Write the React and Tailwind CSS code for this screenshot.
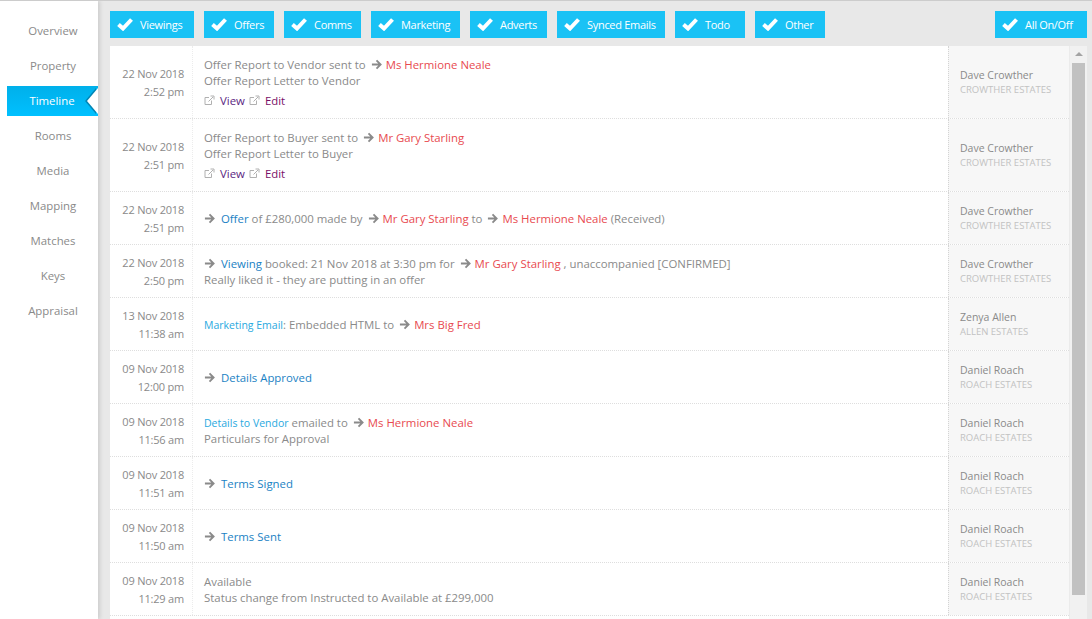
const tabs = ["Overview", "Property", "Timeline", "Rooms", "Media", "Mapping", "Matches", "Keys", "Appraisal"];
const filters = [
  { label: "Viewings", width: "w-[84px]" },
  { label: "Offers", width: "w-[70px]" },
  { label: "Comms", width: "w-[77px]" },
  { label: "Marketing", width: "w-[89px]" },
  { label: "Adverts", width: "w-[77px]" },
  { label: "Synced Emails", width: "w-[108px]" },
  { label: "Todo", width: "w-[70px]" },
  { label: "Other", width: "w-[70px]" },
];

const Arrow = ({ first }) => (
  <svg
    viewBox="0 0 12 12"
    className={`inline-block h-[11px] w-[11px] align-[-1px] text-[#8a8a8a] ${first ? "mr-[6px]" : "ml-[5px] mr-[4px]"}`}
    fill="none"
    stroke="currentColor"
    strokeWidth="2"
  >
    <path d="M1 6h9M6 1.5 10.5 6 6 10.5" />
  </svg>
);

const Ext = ({ className }) => (
  <svg viewBox="0 0 11 11" className={`inline-block h-[11px] w-[11px] align-[-1px] text-[#b0b0b0] ${className}`} fill="none" stroke="currentColor" strokeWidth="1">
    <path d="M7.5 5.5v4h-6.5v-7h4" />
    <path d="M4.5 6.5 9 2M6.5 1h3.5v3.5" />
  </svg>
);

const Tick = () => (
  <svg viewBox="0 0 16 13" className="h-[13px] w-[16px] shrink-0" fill="none" stroke="currentColor" strokeWidth="4">
    <path d="M1.5 6.5 6 10.5 14.5 1.5" />
  </svg>
);

const Name = ({ children }) => <span className="text-[#e84a50]">{children}</span>;
const Link = ({ children }) => <span className="text-[#1a82c4]">{children}</span>;
const Mail = ({ children }) => <span className="text-[10.5px] text-[#29a9e0]">{children}</span>;

const Actions = () => (
  <div className="mt-[4px]">
    <Ext className="mr-[5px]" />
    <span className="mr-[4px] text-[#5a1e82]">View</span>
    <Ext className="mr-[5px]" />
    <span className="text-[#7a0f66]">Edit</span>
  </div>
);

const rows = [
  {
    date: "22 Nov 2018", time: "2:52 pm", who: "Dave Crowther", firm: "CROWTHER ESTATES", tall: true,
    body: (
      <>
        <div>Offer Report to Vendor sent to<Arrow /><Name>Ms Hermione Neale</Name></div>
        <div>Offer Report Letter to Vendor</div>
        <Actions />
      </>
    ),
  },
  {
    date: "22 Nov 2018", time: "2:51 pm", who: "Dave Crowther", firm: "CROWTHER ESTATES", tall: true,
    body: (
      <>
        <div>Offer Report to Buyer sent to<Arrow /><Name>Mr Gary Starling</Name></div>
        <div>Offer Report Letter to Buyer</div>
        <Actions />
      </>
    ),
  },
  {
    date: "22 Nov 2018", time: "2:51 pm", who: "Dave Crowther", firm: "CROWTHER ESTATES",
    body: (
      <div><Arrow first /><Link>Offer</Link> of £280,000 made by<Arrow /><Name>Mr Gary Starling</Name> to<Arrow /><Name>Ms Hermione Neale</Name> (Received)</div>
    ),
  },
  {
    date: "22 Nov 2018", time: "2:50 pm", who: "Dave Crowther", firm: "CROWTHER ESTATES",
    body: (
      <>
        <div><Arrow first /><Link>Viewing</Link> booked: 21 Nov 2018 at 3:30 pm for<Arrow /><Name>Mr Gary Starling</Name> , unaccompanied [CONFIRMED]</div>
        <div>Really liked it - they are putting in an offer</div>
      </>
    ),
  },
  {
    date: "13 Nov 2018", time: "11:38 am", who: "Zenya Allen", firm: "ALLEN ESTATES",
    body: <div><Mail>Marketing Email</Mail>: Embedded HTML to<Arrow /><Name>Mrs Big Fred</Name></div>,
  },
  {
    date: "09 Nov 2018", time: "12:00 pm", who: "Daniel Roach", firm: "ROACH ESTATES",
    body: <div><Arrow first /><Link>Details Approved</Link></div>,
  },
  {
    date: "09 Nov 2018", time: "11:56 am", who: "Daniel Roach", firm: "ROACH ESTATES",
    body: (
      <>
        <div><Mail>Details to Vendor</Mail> emailed to<Arrow /><Name>Ms Hermione Neale</Name></div>
        <div>Particulars for Approval</div>
      </>
    ),
  },
  {
    date: "09 Nov 2018", time: "11:51 am", who: "Daniel Roach", firm: "ROACH ESTATES",
    body: <div><Arrow first /><Link>Terms Signed</Link></div>,
  },
  {
    date: "09 Nov 2018", time: "11:50 am", who: "Daniel Roach", firm: "ROACH ESTATES",
    body: <div><Arrow first /><Link>Terms Sent</Link></div>,
  },
  {
    date: "09 Nov 2018", time: "11:29 am", who: "Daniel Roach", firm: "ROACH ESTATES",
    body: (
      <>
        <div>Available</div>
        <div>Status change from Instructed to Available at £299,000</div>
      </>
    ),
  },
];

function FilterButton({ label, width }) {
  return (
    <button className={`flex h-[27px] items-center gap-[7px] whitespace-nowrap bg-[#1ac2f5] pl-[7px] text-[11px] tracking-[-0.3px] text-white ${width}`}>
      <Tick />
      <span className="pt-[1px]">{label}</span>
    </button>
  );
}

export default function App() {
  return (
    <div className="flex h-[619px] w-[1092px] overflow-hidden border-t border-[#cccccc] bg-[#e8e8e8] font-['Open_Sans',sans-serif] text-[11.4px] text-[#8a8a8a]">
      <nav className="h-full w-[98px] shrink-0 bg-white pl-[7px] pt-[12px] shadow-[2px_0_4px_rgba(0,0,0,0.12)]">
        {tabs.map((t) =>
          t === "Timeline" ? (
            <div key={t} className="flex h-[35px] items-center">
              <div className="relative flex h-[30px] w-[93px] items-center justify-center bg-gradient-to-b from-[#00b0ea] to-[#00c0ff] pr-[1px] text-white">
                {t}
                <span className="absolute right-[2px] top-[2px] h-0 w-0 border-y-[13px] border-r-[11px] border-y-transparent border-r-[#0085b5]" />
                <span className="absolute right-0 top-[2px] h-0 w-0 border-y-[13px] border-r-[11px] border-y-transparent border-r-white" />
              </div>
            </div>
          ) : (
            <div key={t} className="flex h-[35px] w-[93px] items-center justify-center pr-[1px]">
              {t}
            </div>
          )
        )}
      </nav>
      <main className="min-w-0 flex-1 pl-[12px] pr-[5px] pt-[10px]">
        <div className="flex h-[27px] justify-between">
          <div className="flex gap-[10px]">
            {filters.map((f) => (
              <FilterButton key={f.label} label={f.label} width={f.width} />
            ))}
          </div>
          <FilterButton label="All On/Off" width="w-[92px]" />
        </div>
        <div className="mt-[8px] flex h-[573px] overflow-hidden bg-white">
          <div className="min-w-0 flex-1">
            {rows.map((r, i) => (
              <div key={i} className={`flex border-b border-dotted border-[#dedede] ${r.tall ? "h-[73px]" : "h-[53px]"}`}>
                <div className="flex w-[83px] shrink-0 flex-col justify-center border-r border-dotted border-[#ececec] pr-[8px] pt-[2px] text-right text-[11px] leading-[18px] tracking-[-0.2px]">
                  <div className="whitespace-nowrap">{r.date}</div>
                  <div className="whitespace-nowrap">{r.time}</div>
                </div>
                <div className={`flex min-w-0 flex-1 flex-col justify-center pl-[11px] leading-[16px] ${r.tall ? "pt-[2px]" : "pt-[1px]"}`}>
                  {r.body}
                </div>
                <div className="flex w-[121px] shrink-0 flex-col justify-center border-l border-dotted border-[#d4d4d4] bg-[#f7f7f7] pl-[11px]">
                  <div className="text-[10.5px] leading-[15px]">{r.who}</div>
                  <div className="whitespace-nowrap text-[9.5px] leading-[14px] text-[#c2c2c2]">{r.firm}</div>
                </div>
              </div>
            ))}
          </div>
          <div className="relative w-[18px] shrink-0 border-l border-[#ebebeb] bg-[#f1f1f1]">
            <span className="absolute left-[5px] top-[6px] h-0 w-0 border-x-[4px] border-b-[4px] border-x-transparent border-b-[#a3a3a3]" />
            <div className="ml-[2px] mr-[2px] mt-[17px] h-[532px] bg-[#c1c1c1]" />
          </div>
        </div>
      </main>
    </div>
  );
}
